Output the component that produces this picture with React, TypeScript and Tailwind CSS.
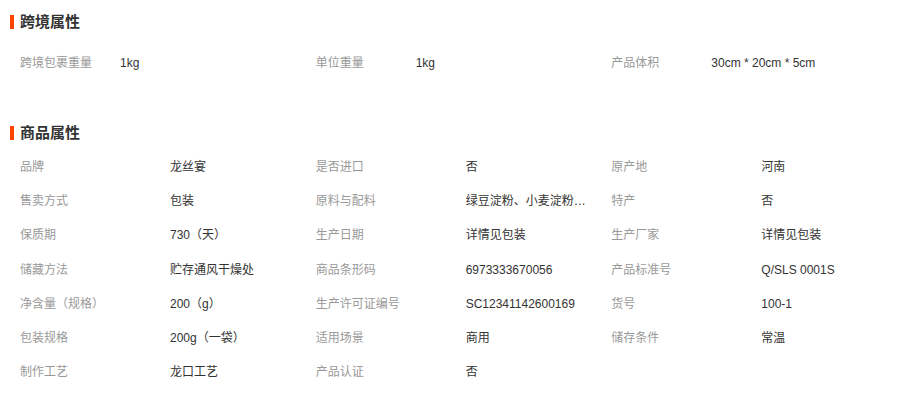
const cross = [
  ["跨境包裹重量", "1kg"],
  ["单位重量", "1kg"],
  ["产品体积", "30cm * 20cm * 5cm"],
];

const goods = [
  ["品牌", "龙丝宴"],
  ["是否进口", "否"],
  ["原产地", "河南"],
  ["售卖方式", "包装"],
  ["原料与配料", "绿豆淀粉、小麦淀粉、水"],
  ["特产", "否"],
  ["保质期", "730（天）"],
  ["生产日期", "详情见包装"],
  ["生产厂家", "详情见包装"],
  ["储藏方法", "贮存通风干燥处"],
  ["商品条形码", "6973333670056"],
  ["产品标准号", "Q/SLS 0001S"],
  ["净含量（规格）", "200（g）"],
  ["生产许可证编号", "SC12341142600169"],
  ["货号", "100-1"],
  ["包装规格", "200g（一袋）"],
  ["适用场景", "商用"],
  ["储存条件", "常温"],
  ["制作工艺", "龙口工艺"],
  ["产品认证", "否"],
];

function Heading({ title }: { title: string }) {
  return (
    <div className="flex items-center h-[28px] pl-[10px]">
      <span className="w-[4px] h-[14px] bg-[#ff4400]" />
      <h2 className="ml-[6px] text-[15px] font-bold text-[#333]">{title}</h2>
    </div>
  );
}

export default function App() {
  return (
    <div
      className="w-[910px] h-[401px] bg-white text-[12px] overflow-hidden"
      style={{ fontFamily: "'Liberation Sans', 'Noto Sans CJK SC', sans-serif" }}
    >
      <div className="pt-[8px]">
        <Heading title="跨境属性" />
        <div className="grid grid-cols-3 w-[907px] pl-[20px] mt-[10px]">
          {cross.map(([k, v]) => (
            <div key={k} className="flex items-center h-[34px]">
              <span className="w-[100px] text-[#999]">{k}</span>
              <span className="text-[#333]">{v}</span>
            </div>
          ))}
        </div>
      </div>

      <div className="mt-[39px]">
        <Heading title="商品属性" />
        <div className="grid grid-cols-3 w-[907px] pl-[20px] mt-[3px]">
          {goods.map(([k, v]) => (
            <div key={k} className="flex items-center h-[34.2px]">
              <span className="w-[150px] shrink-0 text-[#999]">{k}</span>
              <span className="w-[125px] truncate text-[#333]">{v}</span>
            </div>
          ))}
        </div>
      </div>
    </div>
  );
}
